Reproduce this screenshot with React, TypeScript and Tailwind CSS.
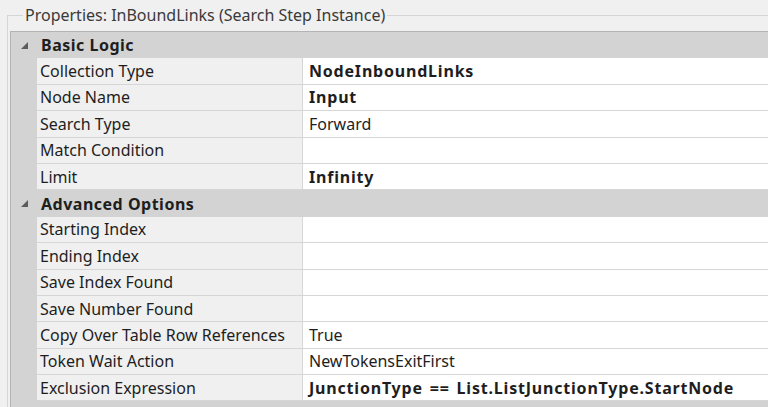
import type { ReactNode } from "react";

type Prop = { name: string; value?: string; bold?: boolean };
type Group = { title: string; props: Prop[] };

const GROUPS: Group[] = [
  {
    title: "Basic Logic",
    props: [
      { name: "Collection Type", value: "NodeInboundLinks", bold: true },
      { name: "Node Name", value: "Input", bold: true },
      { name: "Search Type", value: "Forward" },
      { name: "Match Condition" },
      { name: "Limit", value: "Infinity", bold: true },
    ],
  },
  {
    title: "Advanced Options",
    props: [
      { name: "Starting Index" },
      { name: "Ending Index" },
      { name: "Save Index Found" },
      { name: "Save Number Found" },
      { name: "Copy Over Table Row References", value: "True" },
      { name: "Token Wait Action", value: "NewTokensExitFirst" },
      {
        name: "Exclusion Expression",
        value: "JunctionType == List.ListJunctionType.StartNode",
        bold: true,
      },
    ],
  },
];

function Collapse() {
  return (
    <svg width="7" height="7" viewBox="0 0 7 7" className="block">
      <polygon points="7,0 7,7 0,7" fill="#5c5c5c" />
    </svg>
  );
}

function Row({ children }: { children: ReactNode }) {
  return <div className="flex h-[26.4px] shrink-0">{children}</div>;
}

function GroupHeader({ title }: { title: string }) {
  return (
    <Row>
      <div className="w-[26px] shrink-0 flex items-center pl-[10px]">
        <Collapse />
      </div>
      <div className="flex-1 flex items-center pl-[4px] font-bold tracking-[0.5px] text-[#1e1e1e]">
        {title}
      </div>
    </Row>
  );
}

function PropRow({ prop }: { prop: Prop }) {
  return (
    <Row>
      <div className="w-[26px] shrink-0" />
      <div className="w-[266px] shrink-0 flex items-center pl-[3px] bg-[#f0f0f0] border-b border-r border-[#d6d6d6] text-[#1e1e1e] whitespace-nowrap overflow-hidden">
        {prop.name}
      </div>
      <div
        className={
          "flex-1 flex items-center pl-[6px] bg-white border-b border-[#d6d6d6] text-[#1e1e1e] whitespace-nowrap overflow-hidden " +
          (prop.bold ? "font-bold tracking-[0.8px] [word-spacing:2px]" : "")
        }
      >
        {prop.value ?? ""}
      </div>
    </Row>
  );
}

export default function App() {
  return (
    <div
      className="w-[768px] h-[407px] overflow-hidden bg-[#f0f0f0] pt-[4px] text-[16px] leading-none"
      style={{ fontFamily: '"Noto Sans", "Open Sans", sans-serif' }}
    >
      <fieldset className="ml-[7px] h-[420px] border border-r-0 border-[#d5d5d5] pl-[2px] pt-[5px]">
        <legend className="ml-[13px] px-[2px] text-[#3a3a3a] leading-[22px]">
          Properties: InBoundLinks (Search Step Instance)
        </legend>
        <div className="flex flex-col h-full bg-[#d3d3d3] border-t border-l border-[#b4b4b4]">
          {GROUPS.map((g) => (
            <div key={g.title} className="flex flex-col">
              <GroupHeader title={g.title} />
              {g.props.map((p) => (
                <PropRow key={p.name} prop={p} />
              ))}
            </div>
          ))}
        </div>
      </fieldset>
    </div>
  );
}
